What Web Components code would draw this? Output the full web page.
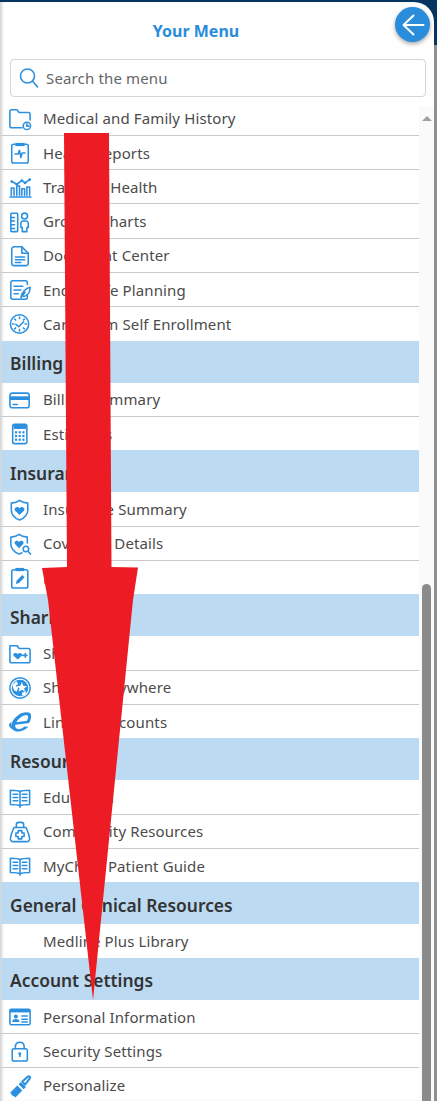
<!DOCTYPE html>
<html lang="en"><head><meta charset="utf-8"><title>Your Menu</title>
<style>
html,body{margin:0;padding:0;height:100%;overflow:hidden;background:#8f8f8f;font-family:"Noto Sans","Liberation Sans",sans-serif}
</style></head><body>
<menu-panel>
  <menu-section-row kind="item" icon="folderclock">Medical and Family History</menu-section-row>
  <menu-section-row kind="item" icon="report">Health Reports</menu-section-row>
  <menu-section-row kind="item" icon="trend">Track My Health</menu-section-row>
  <menu-section-row kind="item" icon="growth">Growth Charts</menu-section-row>
  <menu-section-row kind="item" icon="doc">Document Center</menu-section-row>
  <menu-section-row kind="item" icon="plan">End of Life Planning</menu-section-row>
  <menu-section-row kind="item" icon="clock" last>Care Team Self Enrollment</menu-section-row>
  <menu-section-row kind="head">Billing</menu-section-row>
  <menu-section-row kind="item" icon="card">Billing Summary</menu-section-row>
  <menu-section-row kind="item" icon="calc" last>Estimates</menu-section-row>
  <menu-section-row kind="head">Insurance</menu-section-row>
  <menu-section-row kind="item" icon="shield">Insurance Summary</menu-section-row>
  <menu-section-row kind="item" icon="shieldq">Coverage Details</menu-section-row>
  <menu-section-row kind="item" icon="clippen" last>Referrals</menu-section-row>
  <menu-section-row kind="head">Sharing</menu-section-row>
  <menu-section-row kind="item" icon="folderheart">Share Info</menu-section-row>
  <menu-section-row kind="item" icon="globe">Share Everywhere</menu-section-row>
  <menu-section-row kind="item" icon="elogo" last>Link My Accounts</menu-section-row>
  <menu-section-row kind="head">Resources</menu-section-row>
  <menu-section-row kind="item" icon="book">Education</menu-section-row>
  <menu-section-row kind="item" icon="kit">Community Resources</menu-section-row>
  <menu-section-row kind="item" icon="book" last>MyChart Patient Guide</menu-section-row>
  <menu-section-row kind="head">General Clinical Resources</menu-section-row>
  <menu-section-row kind="item" last>Medline Plus Library</menu-section-row>
  <menu-section-row kind="head">Account Settings</menu-section-row>
  <menu-section-row kind="item" icon="id">Personal Information</menu-section-row>
  <menu-section-row kind="item" icon="lock">Security Settings</menu-section-row>
  <menu-section-row kind="item" icon="brush">Personalize</menu-section-row>
</menu-panel>
<script>
const S='fill="none" stroke="#2b90e0" stroke-width="1.7" stroke-linecap="round" stroke-linejoin="round"';
const F='fill="#2b90e0"';
const ICONS={
folderclock:`<path ${S} d="M14 21.500H3A2 2 0 0 1 1 19.500V4A2 2 0 0 1 3 2H9L11 5H21A2 2 0 0 1 23 7V13"/><circle ${S} cx="19.500" cy="19.500" r="4"/><path ${S} d="M19.500 17.500V19.800H21.500"/>`,
report:`<rect ${S} x="3" y="2.500" width="18" height="20.500" rx="2"/><path fill="#2b90e0" d="M7 1H17V4.500H7Z"/><path ${S} d="M6.500 13H10L11.300 9L13 17L14.300 12H17.500"/>`,
trend:`<path ${S} stroke-width="1.300" d="M1 23H24"/><path ${S} stroke-width="1.200" d="M2.500 21V13H5.500V21M8.500 21V11H11.500V21M14 21V14H17V21M19.500 21V12H22.500V21"/><path ${S} stroke-width="1" d="M3 6L8.500 9L14 5L17.500 7.500L22.500 4"/><circle ${F} cx="3" cy="6" r="1.500"/><circle ${F} cx="8.500" cy="9" r="1.500"/><circle ${F} cx="14" cy="5" r="1.500"/><circle ${F} cx="17.500" cy="7.500" r="1.500"/><circle ${F} cx="22.500" cy="4" r="1.500"/>`,
growth:`<rect ${S} x="2" y="2.500" width="7.500" height="20" rx="1"/><path ${S} d="M2 7H6M2 11H6M2 15H6M2 19H6"/><circle ${S} cx="17" cy="5.500" r="3.200"/><path ${S} d="M13 18V13A2.500 2.500 0 0 1 15.500 11H18.500A2.500 2.500 0 0 1 21 13V18H19.500V22.500H14.500V18Z"/>`,
doc:`<path ${S} d="M14 2H5.500A2.500 2.500 0 0 0 3 4.500V20A2.500 2.500 0 0 0 5.500 22.500H18.500A2.500 2.500 0 0 0 21 20V9Z"/><path ${S} d="M14 2V9H21"/><path ${S} d="M7 13H17M7 16H17M7 19H13"/>`,
plan:`<path ${S} d="M20 6V4A2 2 0 0 0 18 2H4A2 2 0 0 0 2 4V20A2 2 0 0 0 4 22H18A2 2 0 0 0 20 20V17"/><path ${S} d="M5.500 8H15M5.500 12H13M5.500 16H10"/><path ${S} d="M13 20.500C14 14.500 17.500 10.500 23 9C23 13.500 21 18.500 16 19M17.500 14.500L13 20.500"/>`,
clock:`<circle ${S} stroke-width="2" cx="11.500" cy="12" r="10"/><path ${S} stroke-width="1.200" d="M11.500 4.500V6M11.500 18V19.500M4 12H5.500M17.500 12H19M6.200 6.700L7.200 7.700M15.800 16.300L16.800 17.300M16.800 6.700L15.800 7.700M7.200 16.300L6.200 17.300"/><path ${S} stroke-width="1.900" d="M7.500 12.500L10.500 15L16 9.500"/>`,
card:`<rect ${S} x="1" y="4.500" width="21" height="16" rx="2.500"/><path ${F} d="M1 8H22V12H1Z"/><path ${S} d="M4.500 17H9"/>`,
calc:`<rect ${S} x="4" y="1.500" width="15.500" height="21" rx="2"/><path ${F} d="M5 2H18.500V6.500H5Z"/><g ${F}><rect x="6.500" y="9" width="2.400" height="2.400"/><rect x="10.500" y="9" width="2.400" height="2.400"/><rect x="14.500" y="9" width="2.400" height="2.400"/><rect x="6.500" y="13" width="2.400" height="2.400"/><rect x="10.500" y="13" width="2.400" height="2.400"/><rect x="14.500" y="13" width="2.400" height="2.400"/><rect x="6.500" y="17" width="2.400" height="2.400"/><rect x="10.500" y="17" width="2.400" height="2.400"/><rect x="14.500" y="17" width="2.400" height="2.400"/></g>`,
shield:`<path ${S} d="M11.500 1.500C14 3.500 17 4.200 20.500 4.500V12C20.500 17.500 16.500 21 11.500 23C6.500 21 2.500 17.500 2.500 12V4.500C6 4.200 9 3.500 11.500 1.500Z"/><path ${F} d="M11.500 17.500L6.500 12.500C4.800 9.800 9.300 7.300 11.500 10C13.700 7.300 18.200 9.800 16.500 12.500Z"/>`,
shieldq:`<path ${S} d="M20 11V4.500C16.500 4.200 13.500 3.500 11 1.500C8.500 3.500 5.500 4.200 2 4.500V12C2 17.500 6 21 11 23L14 21.500"/><path ${F} d="M11 16.500L6.500 12C4.800 9.500 8.800 7 11 9.700C13.200 7 17.200 9.500 15.500 12Z"/><circle ${S} cx="18.500" cy="17.500" r="3"/><path ${S} d="M20.700 20L23.500 23"/>`,
clippen:`<rect ${S} x="3" y="3" width="17.500" height="20" rx="2"/><path ${F} d="M7 1H16.500V4.500H7Z"/><path ${F} d="M7.500 18.500L8.300 15L14.500 8.800L17 11.300L11 17.500Z"/>`,
folderheart:`<path ${S} d="M3 21.500A2 2 0 0 1 1 19.500V3L9 3L11 6H21A2 2 0 0 1 23 8V19.500A2 2 0 0 1 21 21.500Z"/><path ${F} d="M9.500 18L5 14C3.300 11.500 7.500 9.800 9.500 12C11.500 9.800 15.500 11.500 14 14Z"/><path ${S} d="M15 13.500H19.500M17.800 11.500V15.500"/>`,
globe:`<circle ${S} stroke-width="1.600" stroke-dasharray="2 1.200" cx="12" cy="12" r="11"/><circle ${F} cx="12" cy="12" r="9"/><path fill="#fff" d="M3.500 9L8 4.500L10 7.500L7 9.500L10 11.500L8.500 16L5.500 14.500ZM14.500 17L19 15.500L17.500 19.500L14 20Z"/><path fill="#fff" d="M14 5.500L15.500 9.500L20 10L16.500 12.200L17.500 16L14 14L10.500 16L11.500 12.200L8.500 10L12.500 9.500Z"/>`,
elogo:`<path fill="#2b90e0" d="M23.500 2.500C19.500 .5 14 1.500 10 4.500C5.500 7.500 3 11.500 2.800 15.200C2.500 20.500 6.500 23 11.500 22.300C15.500 21.800 18.500 20 21 17.300L16.800 16.800C14.800 18.800 12.500 19.800 10.500 19.800C8 19.800 6.300 18 6.800 15L22 13C24 9.500 24.800 6 23.500 2.500ZM8 12.300C10 8.500 14 5 18 4.500C20 4.300 21 5.300 20.800 7.200C20.700 8.300 20.300 9.500 19.500 10.500ZM.6 13.500C-.2 14.700 -.1 16 .5 17C1.800 19 3.500 20.300 5.500 21C3 19 1.800 16 2.800 12Z"/>`,
book:`<path ${S} d="M12 5C10.500 4 8 3.500 1.500 3.500V19C8 19 10.500 19.500 12 20.500C13.500 19.500 16 19 22.500 19V3.500C16 3.500 13.500 4 12 5Z"/><path ${S} d="M12 5V22"/><path ${S} d="M4.500 8H9.500M4.500 11.500H9.500M4.500 15H9.500M14.500 8H19.500M14.500 11.500H19.500M14.500 15H19.500"/>`,
kit:`<path ${S} d="M8 7V4A2.500 2.500 0 0 1 10.500 1.500H13.500A2.500 2.500 0 0 1 16 4V7"/><path ${S} d="M5.500 7H18.500C20 10.500 22 14.500 22.500 19A3 3 0 0 1 19.500 22.500H4.500A3 3 0 0 1 1.500 19C2 14.500 4 10.500 5.500 7Z"/><path ${S} d="M10 10.500H14V13H16.500V17H14V19.500H10V17H7.500V13H10Z"/>`,
id:`<rect ${S} x="1" y="3.500" width="22" height="17" rx="1.500"/><path ${F} d="M1 3.500H23V7H1Z"/><circle ${F} cx="7.500" cy="11.500" r="2.200"/><path ${F} d="M3.500 17.500C3.500 15 5.500 14.300 7.500 14.300S11.500 15 11.500 17.500Z"/><path ${S} stroke-width="1.400" d="M14 11H20M14 14.500H20M14 17.500H20"/>`,
lock:`<rect ${S} x="3.500" y="9.500" width="16.500" height="13.500" rx="2"/><path ${S} d="M7 9.500V6.500A4.800 4.800 0 0 1 16.500 6.500V9.500"/><circle ${F} cx="11.800" cy="15" r="1.600"/><path ${S} d="M11.800 15.500V18"/>`,
brush:`<path ${F} d="M1 19.500L9 11.500L14.500 17L7 24.500L5 22.500L4 23.500L3.500 21.500L2.500 22L2.800 20.500Z"/><path ${F} d="M10.500 10L13 7.500L18.500 13L16 15.500Z"/><path fill="none" stroke="#2b90e0" stroke-width="2.200" stroke-linejoin="round" d="M14.500 7L21 1.500C22.500 1.300 23.200 2 23 3.500L17.500 10.500Z"/>`
};
class MenuIcon extends HTMLElement{
  connectedCallback(){
    const r=this.attachShadow({mode:'open'});
    r.innerHTML=`<style>:host{display:block;width:22px;height:22px}svg{display:block;overflow:visible}</style><svg width="22" height="22" viewBox="0 0 24 24" aria-hidden="true">${ICONS[this.getAttribute('name')]||''}</svg>`;
  }
}
customElements.define('menu-icon',MenuIcon);
class MenuSectionRow extends HTMLElement{
  connectedCallback(){
    const r=this.attachShadow({mode:'open'});
    const head=this.getAttribute('kind')==='head';
    const icon=this.getAttribute('icon');
    r.innerHTML=`<style>
    :host{display:flex;align-items:center;box-sizing:border-box;color:#4b4b4b}
    :host([kind=item]){height:34.25px;font-size:15px;letter-spacing:.12px;border-bottom:1px solid #c9c9c9;padding-left:8px;margin-left:1px}
    :host([kind=item][last]){height:33.5px;border-bottom:none}
    :host([kind=head]){height:42px;background:#bcdaf2;color:#333;font-size:17.4px;font-weight:600;padding-left:9px;margin-left:1px;padding-top:3px}
    .ic{width:34px;flex:none;margin-top:1px}
    </style>${head?'':`<div class="ic">${icon?`<menu-icon name="${icon}"></menu-icon>`:''}</div>`}<slot></slot>`;
  }
}
customElements.define('menu-section-row',MenuSectionRow);
class MenuSearch extends HTMLElement{
  connectedCallback(){
    const r=this.attachShadow({mode:'open'});
    r.innerHTML=`<style>
    :host{display:flex;align-items:center;gap:7px;box-sizing:border-box;height:38px;margin:0 8px 0 10px;border:1px solid #d5d5d5;border-radius:4px;padding:0 8px;color:#666;font-size:15px;letter-spacing:.15px}
    svg{display:block;flex:none}
    </style><svg width="20" height="22" viewBox="0 0 20 22" fill="none" stroke="#2b90e0" stroke-width="1.600" stroke-linecap="round"><circle cx="8.500" cy="9" r="7"/><path d="M13.500 14L18.500 20"/></svg><span>Search the menu</span>`;
  }
}
customElements.define('menu-search',MenuSearch);
class MenuBack extends HTMLElement{
  connectedCallback(){
    const r=this.attachShadow({mode:'open'});
    r.innerHTML=`<style>
    :host{position:absolute;left:395px;top:7px;width:35px;height:35px;border-radius:50%;background:#2a8ddc;box-shadow:0 2px 4px rgba(0,0,0,.35);display:flex;align-items:center;justify-content:center}
    svg{display:block}
    </style><svg width="24" height="24" viewBox="0 0 24 24" fill="none" stroke="#fff" stroke-width="2" stroke-linecap="round" stroke-linejoin="round"><path d="M2.500 12H22.500M12.500 2.500L2.500 12L12.500 21.500"/></svg>`;
  }
}
customElements.define('menu-back',MenuBack);
class MenuScrollbar extends HTMLElement{
  connectedCallback(){
    const r=this.attachShadow({mode:'open'});
    r.innerHTML=`<style>
    :host{display:block;width:15px;flex:none;background:#fafafa;position:relative;margin-top:4px}
    .up{position:absolute;left:3px;top:10px;width:0;height:0;border:5px solid transparent;border-top:0;border-bottom:5px solid #a0a0a0}
    .thumb{position:absolute;left:3px;width:9px;top:478px;bottom:0;background:#8a8a8a;border-radius:5px 5px 0 0}
    </style><div class="up"></div><div class="thumb"></div>`;
  }
}
customElements.define('menu-scrollbar',MenuScrollbar);
class MenuArrow extends HTMLElement{
  connectedCallback(){
    const r=this.attachShadow({mode:'open'});
    r.innerHTML=`<style>
    :host{position:absolute;left:0;top:0;width:437px;height:1101px;pointer-events:none}
    svg{display:block}
    </style><svg width="437" height="1101" viewBox="0 0 437 1101" aria-hidden="true"><path fill="#ed1c24" d="M64 133H109L111.500 567L138 567.500L133 600L93 1000L48 600L42 568L67 567Z"/></svg>`;
  }
}
customElements.define('menu-arrow',MenuArrow);
class MenuPanel extends HTMLElement{
  connectedCallback(){
    const r=this.attachShadow({mode:'open'});
    r.innerHTML=`<style>
    :host{display:block;position:relative;width:437px;height:1101px;overflow:hidden;background:linear-gradient(180deg,#06365f 0,#06365f 45px,#8f8f8f 45px);padding-right:3px;box-sizing:border-box;padding-top:2px}
    .sheet{height:100%;background:#fff;border-radius:0 20px 0 0;display:flex;flex-direction:column;box-shadow:inset 3px 0 3px -1px rgba(0,0,0,.18)}
    h1{margin:0;height:57px;box-sizing:border-box;padding:17px 42px 0 0;text-align:center;color:#2a8ddc;font-size:16px;line-height:24px;font-weight:700}
    .body{flex:1;display:flex;min-height:0;margin-top:4.700px}
    .list{flex:1;min-width:0;overflow:hidden}
    </style><div class="sheet"><h1>Your Menu</h1><menu-search></menu-search><div class="body"><div class="list"><slot></slot></div><menu-scrollbar></menu-scrollbar></div></div><menu-back></menu-back><menu-arrow></menu-arrow>`;
  }
}
customElements.define('menu-panel',MenuPanel);
</script>
</body></html>
